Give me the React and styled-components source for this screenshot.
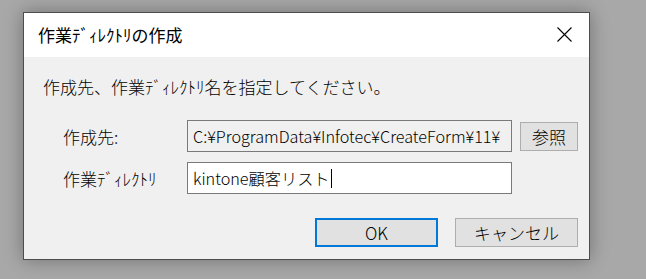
import styled, { createGlobalStyle } from 'styled-components'

const GlobalStyle = createGlobalStyle`
  html, body {
    margin: 0;
    padding: 0;
    background: #a8a8a8;
    font-family: "Noto Sans CJK JP", "Noto Sans", sans-serif;
  }
`

const Backdrop = styled.div`
  width: 646px;
  height: 279px;
  padding: 12px 0 0 23px;
  box-sizing: border-box;
  overflow: hidden;
`

const Dialog = styled.div`
  width: 567px;
  height: 248px;
  box-sizing: border-box;
  border: 1px solid #4d4d4d;
  background: #f0f0f0;
  box-shadow: 0 0 18px rgba(0, 0, 0, 0.32);
  display: flex;
  flex-direction: column;
`

const TitleBar = styled.div`
  height: 44px;
  background: #fff;
  display: flex;
  align-items: center;
  justify-content: space-between;
  padding: 0 17px 1px 14px;
  box-sizing: border-box;
`

const Title = styled.div`
  font-size: 17px;
  color: #000;
  line-height: 20px;
`

const Body = styled.div`
  flex: 1;
  padding: 20px 11px 0 19px;
  display: flex;
  flex-direction: column;
  font-weight: 300;
`

const Message = styled.div`
  font-size: 17px;
  line-height: 20px;
  color: #000;
`

const Form = styled.div`
  display: flex;
  flex-direction: column;
  gap: 10px;
  margin-top: 23px;
  padding-left: 20px;
`

const Row = styled.div`
  display: flex;
  align-items: center;
`

const Label = styled.div`
  width: 124px;
  font-size: 17px;
  color: #000;
`

const Field = styled.div`
  width: 325px;
  height: 32px;
  box-sizing: border-box;
  border: 1px solid #7a7a7a;
  background: ${p => (p.$readOnly ? '#f0f0f0' : '#fff')};
  display: flex;
  align-items: center;
  padding: 0 3px 0 5px;
  overflow: hidden;
  white-space: nowrap;
  font-size: 16.2px;
  color: #000;
`

const Caret = styled.span`
  display: inline-block;
  width: 1px;
  height: 19px;
  background: #000;
  margin-left: 1px;
`

const Button = styled.button`
  width: ${p => p.$width}px;
  height: 29px;
  box-sizing: border-box;
  background: #e1e1e1;
  border: ${p => (p.$primary ? '2px solid #0078d7' : '1px solid #adadad')};
  font-family: "Noto Sans CJK JP", "Noto Sans", sans-serif;
  font-weight: 300;
  font-size: 17px;
  color: #000;
  padding: 0;
  display: flex;
  align-items: center;
  justify-content: center;
`

const Browse = styled(Button)`
  margin-left: 8px;
`

const Footer = styled.div`
  display: flex;
  justify-content: flex-end;
  gap: 17px;
  margin-top: 24px;
`

const CloseIcon = () => (
  <svg width="15" height="15" viewBox="0 0 15 15">
    <path d="M0.5 0.5 L14.5 14.5 M14.5 0.5 L0.5 14.5" stroke="#000" strokeWidth="1.1" fill="none" />
  </svg>
)

export default function App() {
  return (
    <>
      <GlobalStyle />
      <Backdrop>
        <Dialog>
          <TitleBar>
            <Title>作業ﾃﾞｨﾚｸﾄﾘの作成</Title>
            <CloseIcon />
          </TitleBar>
          <Body>
            <Message>作成先、作業ﾃﾞｨﾚｸﾄﾘ名を指定してください。</Message>
            <Form>
              <Row>
                <Label>作成先:</Label>
                <Field $readOnly>C:¥ProgramData¥Infotec¥CreateForm¥11¥</Field>
                <Browse $width={58}>参照</Browse>
              </Row>
              <Row>
                <Label>作業ﾃﾞｨﾚｸﾄﾘ</Label>
                <Field>
                  kintone顧客リスト<Caret />
                </Field>
              </Row>
            </Form>
            <Footer>
              <Button $primary $width={123}>OK</Button>
              <Button $width={123}>キャンセル</Button>
            </Footer>
          </Body>
        </Dialog>
      </Backdrop>
    </>
  )
}
